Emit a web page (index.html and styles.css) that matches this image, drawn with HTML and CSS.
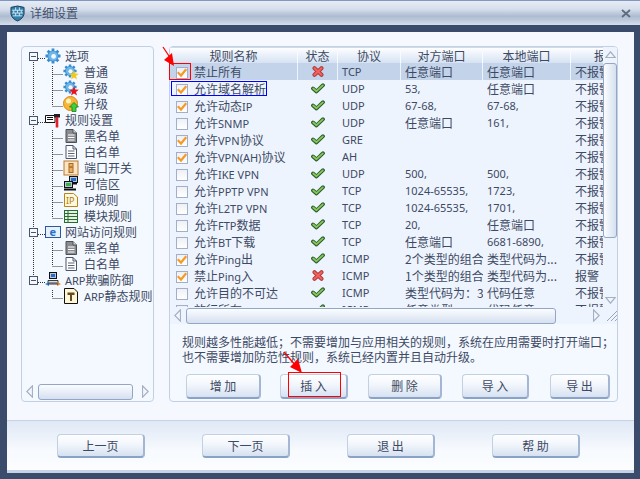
FILE: index.html
```html
<!DOCTYPE html>
<html lang="zh">
<head>
<meta charset="utf-8">
<title>详细设置</title>
<link rel="stylesheet" href="styles.css">
</head>
<body>
<svg class="defs" width="0" height="0" aria-hidden="true">
  <defs>
    <symbol id="ok" viewBox="0 0 14 11"><path d="M2 5.500 L5.500 8.500 L12 2.200" fill="none" stroke="#2f5f2f" stroke-width="3.800" stroke-linecap="round" stroke-linejoin="round"/><path d="M2.200 5.500 L5.500 8.200 L11.800 2.400" fill="none" stroke="#86c95a" stroke-width="1.800" stroke-linecap="round" stroke-linejoin="round"/></symbol>
    <symbol id="no" viewBox="0 0 12 11"><path d="M2.500 2.200 L9.500 8.800 M9.500 2.200 L2.500 8.800" fill="none" stroke="#a83a3a" stroke-width="4" stroke-linecap="round"/><path d="M2.500 2.200 L9.500 8.800 M9.500 2.200 L2.500 8.800" fill="none" stroke="#f4605c" stroke-width="2.200" stroke-linecap="round"/></symbol>
    <symbol id="tick" viewBox="0 0 10 10"><path d="M1.500 5 L4 7.500 L8.500 2" fill="none" stroke="#f59a22" stroke-width="2.200" stroke-linecap="square"/></symbol>
    <symbol id="gear" viewBox="0 0 16 16"><circle cx="8" cy="8" r="5.600" fill="#3f8fd0"/><path d="M8 0.500V15.500M0.500 8H15.500M2.700 2.700L13.300 13.300M13.300 2.700L2.700 13.300" stroke="#3a8ccc" stroke-width="2.800"/><circle cx="8" cy="8" r="4.800" fill="#6cb6e8"/><circle cx="8.600" cy="8.400" r="2.400" fill="#eef8ff"/></symbol>
    <symbol id="star" viewBox="0 0 10 10"><path d="M5 0.300 L6.300 3.600 L9.800 3.800 L7 6 L8 9.600 L5 7.600 L2 9.600 L3 6 L0.200 3.800 L3.700 3.600Z"/></symbol>
    <symbol id="doc" viewBox="0 0 16 16"><path d="M3 1.500H10L13.500 5V14.500H3Z" fill="#fff" stroke="#4a5568"/><path d="M10 1.500V5H13.500" fill="none" stroke="#4a5568"/><path d="M5 7H11.500M5 9.500H11.500M5 12H11.500" stroke="#5a6478"/></symbol>
    <symbol id="docg" viewBox="0 0 16 16"><path d="M3 1.500H10L13.500 5V14.500H3Z" fill="#8a8c90" stroke="#4a5058"/><path d="M10 1.500V5H13.500" fill="#ddd" stroke="#4a5058"/><path d="M5 7H11.500M5 9.500H11.500M5 12H11.500" stroke="#fff"/></symbol>
    <symbol id="net" viewBox="0 0 16 16"><rect x="6.500" y="0.500" width="8" height="6" fill="#b8c6d6" stroke="#111"/><rect x="8" y="2" width="5" height="3" fill="#2a6ad0"/><rect x="1.500" y="5.500" width="8" height="6" fill="#b8c6d6" stroke="#111"/><rect x="3" y="7" width="5" height="3" fill="#3ab04a"/><path d="M9 7.500H14M1 13.500H13" stroke="#111" stroke-width="2"/></symbol>
    <symbol id="al" viewBox="0 0 7 13"><path d="M6.500 0.800V12.200L0.800 6.500Z" fill="#f2f6fc" stroke="#a4b0c4" stroke-width="1.200"/></symbol>
    <symbol id="ar" viewBox="0 0 7 13"><path d="M0.500 0.800V12.200L6.200 6.500Z" fill="#f2f6fc" stroke="#a4b0c4" stroke-width="1.200"/></symbol>
    <symbol id="au" viewBox="0 0 11 7"><path d="M0.800 6.500H10.200L5.500 0.800Z" fill="#f2f6fc" stroke="#a4b0c4" stroke-width="1.200"/></symbol>
    <symbol id="ad" viewBox="0 0 11 7"><path d="M0.800 0.500H10.200L5.500 6.200Z" fill="#f2f6fc" stroke="#a4b0c4" stroke-width="1.200"/></symbol>
  </defs>
</svg>
<div class="window">
  <header class="titlebar">
    <svg class="shield" viewBox="0 0 16 17"><path d="M1 2 Q8 -1 15 2 V9 Q14 14 8 16.500 Q2 14 1 9Z" fill="#2f7fa8" stroke="#243c58"/><path d="M2 5H14M2 8H14M3 11H13M6 2V5M10 2V5M4 5V8M8 5V8M12 5V8M6 8V11M10 8V11" stroke="#cfe8f4" stroke-width="1"/></svg>
    <span class="title">详细设置</span>
    <svg class="close" viewBox="0 0 10 9"><path d="M1 1 L9 8 M9 1 L1 8" stroke="#5d6c80" stroke-width="1.800"/></svg>
  </header>
  <div class="frame">
    <main class="content">
      <nav class="panel tree-panel">
        <svg class="tree-lines" width="133" height="330">
          <path d="M12.500 14V234M17 10.500H24M31.500 18V58M31.500 26.500H42M31.500 42.500H42M31.500 58.500H42M17 74.500H24M31.500 82V170M31.500 90.500H42M31.500 106.500H42M31.500 122.500H42M31.500 138.500H42M31.500 154.500H42M31.500 170.500H42M17 186.500H24M31.500 194V218M31.500 202.500H42M31.500 218.500H42M17 234.500H24M31.500 242V250M31.500 250.500H42" fill="none" stroke="#333" stroke-dasharray="1 1"/>
        </svg>
        <ul class="tree">
          <li class="node top"><i class="exp"></i><svg class="ti"><use href="#gear"/></svg><span>选项</span></li>
          <li class="node"><svg class="ti" viewBox="0 0 16 16"><use href="#gear" width="14" height="14"/><use href="#star" x="6" y="6" width="10" height="10" fill="#f4c81c"/></svg><span>普通</span></li>
          <li class="node"><svg class="ti" viewBox="0 0 16 16"><use href="#gear" width="14" height="14"/><use href="#star" x="6" y="6" width="10" height="10" fill="#e8141c"/></svg><span>高级</span></li>
          <li class="node"><svg class="ti" viewBox="0 0 16 16"><circle cx="7.500" cy="7.500" r="7" fill="#f7b733" stroke="#d8841a"/><circle cx="5.500" cy="5" r="2.500" fill="#fdf0c0"/><path d="M11 6.500 L15.500 11 H13 V15.500 H9 V11 H6.500Z" fill="#3fd03f" stroke="#168016" stroke-width=".8"/></svg><span>升级</span></li>
          <li class="node top"><i class="exp"></i><svg class="ti" viewBox="0 0 16 16"><path d="M0.500 3.500H10V10.500H0.500Z" fill="#fff" stroke="#111"/><path d="M2 5.500H8M2 7.500H8" stroke="#111"/><path d="M9 2H15V5.500H9Z" fill="#222"/><path d="M12 5V15.500" stroke="#e0202a" stroke-width="2.600"/></svg><span>规则设置</span></li>
          <li class="node"><svg class="ti"><use href="#docg"/></svg><span>黑名单</span></li>
          <li class="node"><svg class="ti"><use href="#doc"/></svg><span>白名单</span></li>
          <li class="node"><svg class="ti" viewBox="0 0 16 16"><rect x="1" y="1" width="14" height="14" fill="#fbe3c4" stroke="#b87a30"/><rect x="6" y="3.500" width="4" height="9" fill="#e8b060" stroke="#a86a20"/><path d="M6.500 7H9.500" stroke="#7a4a10"/></svg><span>端口开关</span></li>
          <li class="node"><svg class="ti"><use href="#net"/></svg><span>可信区</span></li>
          <li class="node"><svg class="ti" viewBox="0 0 16 16"><path d="M1.500 1.500H10.500L14.500 5V14.500H1.500Z" fill="#fff8dc" stroke="#b88418"/><text x="3" y="12" class="ip-glyph">IP</text></svg><span><b class="l">IP</b>规则</span></li>
          <li class="node"><svg class="ti" viewBox="0 0 16 16"><rect x="1.500" y="2.500" width="13" height="12" fill="#e4f2e0" stroke="#2c6a34"/><path d="M1.500 5.500H14.500M1.500 8.500H14.500M1.500 11.500H14.500M5 2.500V14.500" stroke="#2c6a34"/></svg><span>模块规则</span></li>
          <li class="node top"><i class="exp"></i><svg class="ti" viewBox="0 0 16 16"><rect x="0.500" y="2.500" width="15" height="11" fill="#e6f0fb" stroke="#2a5a9c"/><text x="4.500" y="12" class="e-glyph">e</text></svg><span>网站访问规则</span></li>
          <li class="node"><svg class="ti"><use href="#docg"/></svg><span>黑名单</span></li>
          <li class="node"><svg class="ti"><use href="#doc"/></svg><span>白名单</span></li>
          <li class="node top"><i class="exp"></i><svg class="ti" viewBox="0 0 16 16"><rect x="4.500" y="0.500" width="7" height="6" fill="#b8c6d6" stroke="#111"/><rect x="6" y="2" width="4" height="3" fill="#2a6ad0"/><path d="M3 8.500H13V11H3Z" fill="#d8dee8" stroke="#111" stroke-width=".8"/><path d="M0 12 L4 10 V14Z" fill="#2a80d8"/><path d="M16 12 L12 10 V14Z" fill="#e8802a"/><path d="M3 12H13" stroke="#333"/></svg><span><b class="l">ARP</b>欺骗防御</span></li>
          <li class="node"><svg class="ti" viewBox="0 0 16 16"><path d="M1.500 0.500H11L14.500 4V15.500H1.500Z" fill="#fff8d8" stroke="#111"/><path d="M4.500 4.500H11.500V7H9V13H7V7H4.500Z" fill="#6a4a20"/></svg><span><b class="l">ARP</b>静态规则</span></li>
        </ul>
        <div class="hscroll tree-scroll">
          <svg class="arrow"><use href="#al"/></svg>
          <i class="thumb-h grow"></i>
          <svg class="arrow far"><use href="#ar"/></svg>
        </div>
      </nav>
      <section class="panel rules-panel">
        <div class="table">
          <div class="row head">
            <span>规则名称</span><span>状态</span><span>协议</span><span>对方端口</span><span>本地端口</span><span class="alarm">报警</span>
          </div>
          <div class="rows">
            <div class="row sel"><span class="name"><i class="cb"><svg><use href="#tick"/></svg></i>禁止所有</span><span class="st"><svg class="x"><use href="#no"/></svg></span><span class="l">TCP</span><span>任意端口</span><span>任意端口</span><span class="alarm">不报警</span></div>
            <div class="row"><span class="name"><i class="cb"><svg><use href="#tick"/></svg></i>允许域名解析</span><span class="st"><svg><use href="#ok"/></svg></span><span class="l">UDP</span><span class="l">53,</span><span>任意端口</span><span class="alarm">不报警</span></div>
            <div class="row"><span class="name"><i class="cb"><svg><use href="#tick"/></svg></i>允许动态<b class="l">IP</b></span><span class="st"><svg><use href="#ok"/></svg></span><span class="l">UDP</span><span class="l">67-68,</span><span class="l">67-68,</span><span class="alarm">不报警</span></div>
            <div class="row"><span class="name"><i class="cb"></i>允许<b class="l">SNMP</b></span><span class="st"><svg><use href="#ok"/></svg></span><span class="l">UDP</span><span>任意端口</span><span class="l">161,</span><span class="alarm">不报警</span></div>
            <div class="row"><span class="name"><i class="cb"><svg><use href="#tick"/></svg></i>允许<b class="l">VPN</b>协议</span><span class="st"><svg><use href="#ok"/></svg></span><span class="l">GRE</span><span></span><span></span><span class="alarm">不报警</span></div>
            <div class="row"><span class="name"><i class="cb"><svg><use href="#tick"/></svg></i>允许<b class="l">VPN(AH)</b>协议</span><span class="st"><svg><use href="#ok"/></svg></span><span class="l">AH</span><span></span><span></span><span class="alarm">不报警</span></div>
            <div class="row"><span class="name"><i class="cb"></i>允许<b class="l">IKE VPN</b></span><span class="st"><svg><use href="#ok"/></svg></span><span class="l">UDP</span><span class="l">500,</span><span class="l">500,</span><span class="alarm">不报警</span></div>
            <div class="row"><span class="name"><i class="cb"></i>允许<b class="l">PPTP VPN</b></span><span class="st"><svg><use href="#ok"/></svg></span><span class="l">TCP</span><span class="l">1024-65535,</span><span class="l">1723,</span><span class="alarm">不报警</span></div>
            <div class="row"><span class="name"><i class="cb"></i>允许<b class="l">L2TP VPN</b></span><span class="st"><svg><use href="#ok"/></svg></span><span class="l">TCP</span><span class="l">1024-65535,</span><span class="l">1701,</span><span class="alarm">不报警</span></div>
            <div class="row"><span class="name"><i class="cb"></i>允许<b class="l">FTP</b>数据</span><span class="st"><svg><use href="#ok"/></svg></span><span class="l">TCP</span><span class="l">20,</span><span>任意端口</span><span class="alarm">不报警</span></div>
            <div class="row"><span class="name"><i class="cb"></i>允许<b class="l">BT</b>下载</span><span class="st"><svg><use href="#ok"/></svg></span><span class="l">TCP</span><span>任意端口</span><span class="l">6681-6890,</span><span class="alarm">不报警</span></div>
            <div class="row"><span class="name"><i class="cb"><svg><use href="#tick"/></svg></i>允许<b class="l">Ping</b>出</span><span class="st"><svg><use href="#ok"/></svg></span><span class="l">ICMP</span><span>2个类型的组合</span><span>类型代码为...</span><span class="alarm">不报警</span></div>
            <div class="row"><span class="name"><i class="cb"><svg><use href="#tick"/></svg></i>禁止<b class="l">Ping</b>入</span><span class="st"><svg class="x"><use href="#no"/></svg></span><span class="l">ICMP</span><span>1个类型的组合</span><span>类型代码为...</span><span class="alarm">报警</span></div>
            <div class="row"><span class="name"><i class="cb"></i>允许目的不可达</span><span class="st"><svg><use href="#ok"/></svg></span><span class="l">ICMP</span><span>类型代码为：3</span><span>代码任意</span><span class="alarm">不报警</span></div>
            <div class="row"><span class="name"><i class="cb"></i>放行所有<b class="l">ICMP</b></span><span class="st"><svg><use href="#ok"/></svg></span><span class="l">ICMP</span><span>任意类型</span><span>代码任意</span><span class="alarm">不报警</span></div>
          </div>
          <div class="vscroll">
            <svg class="tri up"><use href="#au"/></svg>
            <i class="thumb-v"></i>
            <svg class="tri down"><use href="#ad"/></svg>
          </div>
          <div class="hscroll table-scroll">
            <svg class="arrow"><use href="#al"/></svg>
            <i class="thumb-h wide"></i>
            <svg class="arrow after"><use href="#ar"/></svg>
            <svg class="grip" viewBox="0 0 12 12"><path d="M1 11 L11 1 M5 11 L11 5 M9 11 L11 9" stroke="#9aa6b8"/></svg>
          </div>
        </div>
        <p class="hint">规则越多性能越低；不需要增加与应用相关的规则，系统在应用需要时打开端口；<br>也不需要增加防范性规则，系统已经内置并且自动升级。</p>
        <div class="actions">
          <button class="btn w75">增 加</button>
          <button class="btn w68">插 入</button>
          <button class="btn w74">删 除</button>
          <button class="btn w67">导 入</button>
          <button class="btn w60">导 出</button>
        </div>
      </section>
    </main>
    <footer class="footer">
      <button class="btn big">上一页</button>
      <button class="btn big">下一页</button>
      <button class="btn big">退 出</button>
      <button class="btn big">帮 助</button>
    </footer>
  </div>
  <i class="mark red-cb"></i>
  <i class="mark blue-name"></i>
  <i class="mark red-btn"></i>
  <svg class="annot" width="640" height="479" viewBox="0 0 640 479">
    <path d="M163 47 L171 59" stroke="#f00" stroke-width="1.300" fill="none"/>
    <path d="M174 66 L164 60 L172 53Z" fill="#f00"/>
    <path d="M284 352 L296 366" stroke="#f00" stroke-width="1.300" fill="none"/>
    <path d="M302 373 L290 367 L298 359Z" fill="#f00"/>
  </svg>
</div>
</body>
</html>
```

FILE: styles.css
```css
* { box-sizing: border-box; }
html, body { margin: 0; padding: 0; }
body {
  width: 640px;
  height: 479px;
  overflow: hidden;
  font-family: "Noto Sans CJK SC", "Noto Sans", sans-serif;
  font-size: 12px;
  line-height: 16px;
  color: #3d4a63;
}
.defs { position: absolute; }
i { font-style: normal; display: block; }
b { font-weight: normal; }
.l { font-family: "Noto Sans", "Noto Sans CJK SC", sans-serif; font-size: 11px; }

.window {
  position: relative;
  width: 640px;
  height: 479px;
  display: flex;
  flex-direction: column;
  background: #3b4b6c;
}
.titlebar {
  height: 25px;
  display: flex;
  align-items: center;
  padding: 0 9px 0 10px;
  gap: 5px;
  border-top: 1px solid #7f97c0;
  background: linear-gradient(#e6ecf5 0, #d6dfec 8px, #aebcd3 15px, #bcc8db 19px, #dde3ee 25px);
}
.shield { width: 15px; height: 17px; }
.title { font-size: 12px; color: #44526c; flex: 1; }
.close { width: 10px; height: 9px; }

.frame {
  flex: 1;
  display: flex;
  flex-direction: column;
  margin: 7px 6px 6px 7px;
  background: #f5f9ff;
  min-height: 0;
}
.content {
  flex: 1;
  display: flex;
  gap: 15px;
  padding: 14px 16px 18px 14px;
  min-height: 0;
  min-width: 0;
}
.panel {
  border: 1px solid #c3d0e2;
  border-radius: 4px;
  background: #f4f8ff;
  position: relative;
}

/* tree */
.tree-panel {
  width: 133px;
  flex: none;
  display: flex;
  flex-direction: column;
  justify-content: space-between;
  padding-top: 1px;
}
.tree-lines { position: absolute; left: -1px; top: 1px; }
.tree { list-style: none; margin: 0; padding: 0; position: relative; }
.node {
  height: 16px;
  display: flex;
  align-items: center;
  padding-left: 41px;
  gap: 5px;
  white-space: nowrap;
}
.node.top { padding-left: 7px; gap: 4px; }
.exp {
  width: 9px;
  height: 9px;
  margin-right: 3px;
  border: 1px solid #4c5568;
  background: linear-gradient(#4c5568, #4c5568) center / 5px 1px no-repeat #f4f8ff;
}
.ti { width: 16px; height: 16px; flex: none; }
.ip-glyph { font: 9px "Noto Sans", sans-serif; fill: #b07a10; }
.e-glyph { font: bold 11px "Noto Sans", sans-serif; fill: #2a70c8; }

/* scrollbars */
.hscroll { display: flex; align-items: center; }
.tree-scroll { height: 17px; padding: 0 4px; gap: 5px; margin-bottom: 1px; }
.grow { flex: 1; }
.far { margin-left: 4px; }
.thumb-h {
  height: 16px;
  border: 1px solid #93a6c6;
  border-radius: 3px;
  background: linear-gradient(#fbfdff, #d5e0f0);
}
.arrow { width: 7px; height: 13px; flex: none; }

/* table */
.rules-panel { flex: 1; min-width: 0; display: flex; flex-direction: column; }
.table {
  position: relative;
  height: 277px;
  overflow: hidden;
  background: #eef4fe;
  border-radius: 3px 3px 0 0;
}
.row {
  display: grid;
  grid-template-columns: 128px 40px 63px 82px 88px 100px;
  height: 17px;
  align-items: center;
  white-space: nowrap;
}
.row > span { padding-left: 4px; overflow: hidden; display: flex; align-items: center; height: 17px; }
.head {
  height: 16px;
  border-top: 1px solid #cfdaea;
  background: linear-gradient(#fdfeff, #d6e2f3);
  align-items: start;
}
.head > span {
  justify-content: center;
  padding-left: 0;
  border-right: 1px solid #f8fbff;
  height: 15px;
}
.head .alarm { justify-content: flex-start; padding-left: 23px; border: 0; }
.rows { height: 261px; overflow: hidden; }
.sel > span { background: #c2d3ea; border-right: 1px solid #eef4fe; }
.sel > .alarm { border-right: 0; }
.row > .name { display: block; padding-left: 6px; line-height: 17px; }
.cb {
  display: inline-block;
  width: 12px;
  height: 12px;
  margin-right: 6px;
  vertical-align: -2px;
  border: 1px solid #a3afc8;
  background: linear-gradient(#eef0f4, #ffffff);
}
.cb svg { width: 10px; height: 10px; display: block; }
.row > .st { justify-content: center; padding-left: 0; }
.st svg { width: 14px; height: 11px; display: block; }
.st svg.x { width: 12px; }

.vscroll {
  position: absolute;
  right: 0;
  top: 0;
  width: 14px;
  height: 260px;
  display: flex;
  flex-direction: column;
  align-items: center;
  background: #eef4fe;
}
.tri { width: 11px; height: 7px; flex: none; }
.tri.up { margin: 4px 0 5px; }
.thumb-v {
  width: 14px;
  height: 175px;
  flex: none;
  border: 1px solid #93a6c6;
  border-radius: 3px;
  background: linear-gradient(90deg, #fbfdff, #d5e0f0);
}
.tri.down { margin-top: auto; margin-bottom: 3px; }
.table-scroll {
  position: absolute;
  left: 0;
  right: 0;
  bottom: 0;
  height: 17px;
  padding: 0 4px;
  gap: 5px;
  background: #eef4fe;
}
.wide { width: 370px; flex: none; }
.after { margin-left: 32px; }
.grip { width: 12px; height: 12px; margin-left: 1px; flex: none; }

.hint { margin: 10px 0 0 12px; line-height: 15px; white-space: nowrap; font-size: 12px; }
.actions { display: flex; margin: 10px 0 0 16px; }

.btn {
  font: inherit;
  color: #3d4a63;
  padding: 0;
  height: 25px;
  border: 1px solid #c3d0e2;
  border-bottom: 2px solid #8aa2c8;
  border-right: 2px solid #a3b6d4;
  border-radius: 4px;
  background: linear-gradient(#fdfeff, #f2f6fc 45%, #d6e1f1);
}
.w75 { width: 75px; margin-right: 19px; }
.w68 { width: 68px; margin-right: 20px; }
.w74 { width: 74px; margin-right: 20px; }
.w67 { width: 67px; margin-right: 21px; }
.w60 { width: 60px; }

.footer {
  height: 53px;
  display: flex;
  gap: 57px;
  padding: 13px 0 0 50px;
  border-top: 1px solid #c6d3e5;
  border-bottom: 3px solid #c6d3e5;
  background: linear-gradient(#dfe8f5, #f7fafe 60%, #fbfdff);
}
.big { width: 88px; height: 24px; }

/* annotations painted over the screenshot */
.mark { position: absolute; background: transparent; }
.red-cb { left: 169px; top: 63px; width: 22px; height: 17px; border: 1px solid #f00; }
.blue-name { left: 171px; top: 81px; width: 96px; height: 15px; border: 1px solid #00f; }
.red-btn { left: 288px; top: 372px; width: 53px; height: 25px; border: 1px solid #f00; }
.annot { position: absolute; left: 0; top: 0; pointer-events: none; }
```
